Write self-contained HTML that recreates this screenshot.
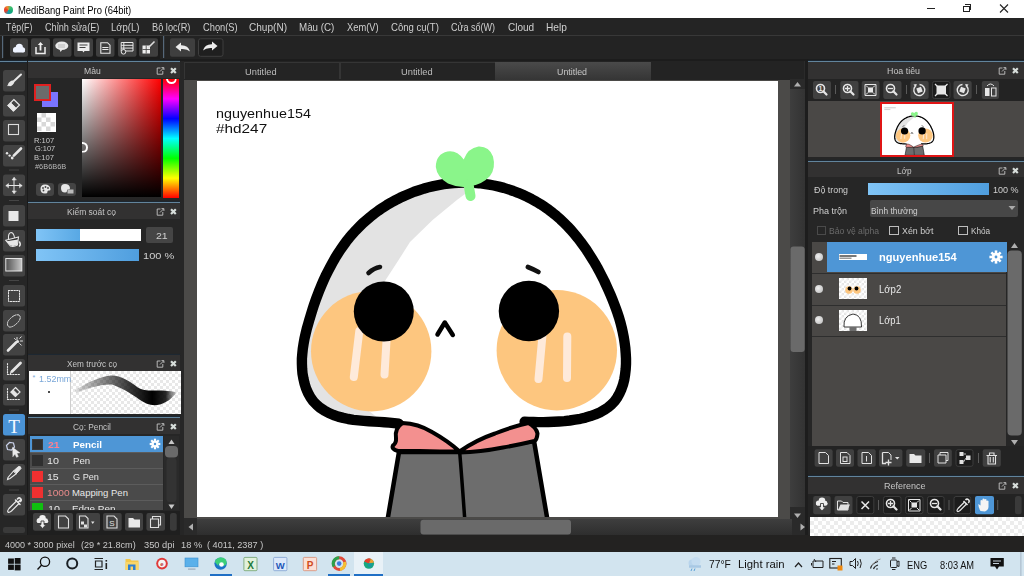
<!DOCTYPE html>
<html><head><meta charset="utf-8">
<style>
*{box-sizing:border-box}
html,body{margin:0;padding:0}
body{width:1024px;height:576px;overflow:hidden;position:relative;background:#262626;font-family:"Liberation Sans",sans-serif;color:#d8d8d8}
.a{position:absolute}
.t{position:absolute;white-space:nowrap;line-height:1}
.btn{position:absolute;background:#474747;border-radius:3px}
.bl{position:absolute;height:1.2px;background:#62849c;box-shadow:0 -1px 1px #1c2935,0 1px 1px #1c2935}
.hdr{position:absolute;background:#323131;height:16px}
</style></head><body>
<!-- title bar -->
<div class="a" style="left:0;top:0;width:1024px;height:18px;background:#fff"></div>
<!-- menubar -->
<div class="a" style="left:0;top:18px;width:1024px;height:17px;background:#242424"></div>
<div class="a" style="left:0;top:35px;width:1024px;height:1px;background:#383838"></div>
<!-- toolbar -->
<div class="a" style="left:0;top:36px;width:1024px;height:25px;background:#232323"></div><div class="a" style="left:0;top:59px;width:1024px;height:2px;background:#1c1c1c"></div><div class="a" style="left:3px;top:36px;width:157px;height:23px;background:#1b1b1b"></div>
<!-- left tool column -->
<div class="a" style="left:0;top:61px;width:28px;height:474px;background:#262626"></div>
<!-- left panel -->
<div class="a" style="left:28px;top:61px;width:152px;height:474px;background:#262626"></div>

<!-- canvas area -->
<div class="a" style="left:184px;top:61px;width:624px;height:474px;background:#4b4a48"></div>
<div class="a" style="left:184px;top:61px;width:624px;height:19px;background:#232323"></div>
<div class="a" style="left:197px;top:81px;width:581px;height:436px;background:#fff"></div>
<!-- right panel -->
<div class="a" style="left:804px;top:61px;width:4px;height:474px;background:#2a2a2a"></div>
<div class="a" style="left:808px;top:61px;width:216px;height:474px;background:#262626"></div>
<!-- status bar -->
<div class="a" style="left:0;top:535px;width:1024px;height:17px;background:#232221"></div>
<!-- taskbar -->
<div class="a" style="left:0;top:552px;width:1024px;height:24px;background:#d2e4ef"></div>
<!-- title content -->
<div class="a" style="left:4px;top:5.5px;width:8.5px;height:8.5px;border-radius:50%;background:conic-gradient(from -80deg,#e8402a 0deg,#f08a30 60deg,#3cc070 120deg,#14a878 200deg,#1a98b0 270deg,#e8402a 330deg)"></div>
<div class="t" id="ttl" style="left:18.20px;top:5.5px;font-size:10.2px;color:#000;transform:scaleX(0.926);transform-origin:0 0">MediBang Paint Pro (64bit)</div>
<div class="a" style="left:927px;top:8px;width:8px;height:1px;background:#222"></div>
<div class="a" style="left:963px;top:5.5px;width:6.5px;height:6.5px;border:1px solid #222"></div>
<div class="a" style="left:965px;top:4px;width:6px;height:6px;border-top:1px solid #222;border-right:1px solid #222"></div>
<svg class="a" style="left:999px;top:4px" width="10" height="9" viewBox="0 0 10 9"><path d="M1 0.5L9 8.5M9 0.5L1 8.5" stroke="#222" stroke-width="1.1"/></svg>
<!-- menu -->
<div class="t" id="m1" style="left:6.14px;top:21.7px;font-size:11px;color:#cfcfcf;transform:scaleX(0.800);transform-origin:0 0">Tệp(F)</div>
<div class="t" id="m2" style="left:45.10px;top:21.7px;font-size:11px;color:#cfcfcf;transform:scaleX(0.830);transform-origin:0 0">Chỉnh sửa(E)</div>
<div class="t" id="m3" style="left:110.85px;top:21.7px;font-size:11px;color:#cfcfcf;transform:scaleX(0.865);transform-origin:0 0">Lớp(L)</div>
<div class="t" id="m4" style="left:152.16px;top:21.7px;font-size:11px;color:#cfcfcf;transform:scaleX(0.838);transform-origin:0 0">Bộ lọc(R)</div>
<div class="t" id="m5" style="left:203.25px;top:21.7px;font-size:11px;color:#cfcfcf;transform:scaleX(0.845);transform-origin:0 0">Chọn(S)</div>
<div class="t" id="m6" style="left:249.38px;top:21.7px;font-size:11px;color:#cfcfcf;transform:scaleX(0.915);transform-origin:0 0">Chụp(N)</div>
<div class="t" id="m7" style="left:299.30px;top:21.7px;font-size:11px;color:#cfcfcf;transform:scaleX(0.889);transform-origin:0 0">Màu (C)</div>
<div class="t" id="m8" style="left:347.26px;top:21.7px;font-size:11px;color:#cfcfcf;transform:scaleX(0.847);transform-origin:0 0">Xem(V)</div>
<div class="t" id="m9" style="left:391.22px;top:21.7px;font-size:11px;color:#cfcfcf;transform:scaleX(0.869);transform-origin:0 0">Công cụ(T)</div>
<div class="t" id="mA" style="left:451.04px;top:21.7px;font-size:11px;color:#cfcfcf;transform:scaleX(0.819);transform-origin:0 0">Cửa sổ(W)</div>
<div class="t" id="mB" style="left:507.60px;top:21.7px;font-size:11px;color:#cfcfcf;transform:scaleX(0.911);transform-origin:0 0">Cloud</div>
<div class="t" id="mC" style="left:545.58px;top:21.7px;font-size:11px;color:#cfcfcf;transform:scaleX(0.924);transform-origin:0 0">Help</div>
<!-- toolbar content -->
<svg class="a" style="left:0;top:36px" width="240" height="25" viewBox="0 36 240 25">
<rect x="2" y="36" width="1.2" height="22" fill="#56687a"/>
<g fill="#3f3f3f">
<rect x="10" y="38.3" width="18" height="18.5" rx="2"/>
<rect x="31" y="38.3" width="19" height="18.5" rx="2"/>
<rect x="53" y="38.3" width="18.5" height="18.5" rx="2"/>
<rect x="74" y="38.3" width="19" height="18.5" rx="2"/>
<rect x="96" y="38.3" width="18.5" height="18.5" rx="2"/>
<rect x="118" y="38.3" width="18.5" height="18.5" rx="2"/>
<rect x="139" y="38.3" width="19" height="18.5" rx="2"/>
<rect x="170" y="38.3" width="25" height="18.5" rx="2"/>
</g>
<rect x="198.5" y="38.8" width="24.5" height="17.5" rx="2" fill="#1f1f1f" stroke="#3f3f3f" stroke-width="1"/>
<rect x="163" y="36" width="1.2" height="22" fill="#56687a"/>
<!-- cloud -->
<g fill="#eef3ff"><circle cx="15.6" cy="49.6" r="2.6"/><circle cx="19.3" cy="47.3" r="3.6"/><circle cx="22.6" cy="49.8" r="2.5"/><rect x="13" y="49.5" width="12" height="3" rx="1.4"/></g>
<!-- share -->
<path d="M36 47 V53.5 H45 V47" fill="none" stroke="#eee" stroke-width="1.5"/>
<path d="M40.5 42 L37.8 45 H39.6 V50.5 H41.4 V45 H43.2 Z" fill="#eee"/>
<!-- bubble -->
<ellipse cx="61.8" cy="45.8" rx="6.5" ry="4.3" fill="#e8e8e8"/>
<path d="M59.5 49 L60.5 52 L62.5 49.5Z" fill="#e8e8e8"/>
<path d="M58 45 H65 M58 47 H65" stroke="#999" stroke-width="0.6"/>
<!-- comment -->
<path d="M77.5 42.5 H89.5 V51 H84.5 L83.5 52.5 L82.5 51 H77.5 Z" fill="#ececec"/>
<path d="M79.5 45 H87.5 M79.5 47.5 H85.5" stroke="#3f3f3f" stroke-width="1.1"/>
<!-- doc -->
<path d="M100.8 42.7 H107.5 L110 45.2 V53.2 H100.8 Z" fill="none" stroke="#e8e8e8" stroke-width="1.1"/>
<path d="M102.3 47.5 H108.5 M102.3 49.5 H108.5" stroke="#e8e8e8" stroke-width="1"/>
<!-- list -->
<path d="M121.2 42.5 H133 V51 H121.2 Z M121.2 45.3 H133 M121.2 48.1 H133 M123.8 42.5 V51" fill="none" stroke="#e8e8e8" stroke-width="1"/>
<circle cx="123.5" cy="51.8" r="2.3" fill="#3f3f3f" stroke="#e8e8e8" stroke-width="1"/>
<!-- grid pencil -->
<path d="M142.5 45.5 H150 V53.5 H142.5 Z" fill="#eee"/>
<path d="M146.2 45.5 V53.5 M142.5 49.5 H150" stroke="#3f3f3f" stroke-width="0.8"/>
<path d="M148 48 L154.5 41.5" stroke="#ddd" stroke-width="1.6"/>
<!-- undo -->
<path d="M175.5 47 L181 42.5 V45.3 Q188 45 190 51.5 Q187 48.5 181 49 V51.5 Z" fill="#ececec"/>
<!-- redo -->
<path d="M217.5 46 L212 41.5 V44.3 Q205 44 203 50.5 Q206 47.5 212 48 V50.5 Z" fill="#ececec"/>
</svg>
<div class="bl" style="left:0;top:61px;width:27px"></div>
<div class="bl" style="left:28px;top:61px;width:152px"></div>
<div class="bl" style="left:808px;top:61px;width:216px"></div>
<!-- tool column -->
<div class="a" style="left:27px;top:61px;width:1px;height:474px;background:#1b1b1b"></div>
<svg class="a" style="left:0;top:61px" width="28" height="474" viewBox="0 61 28 474">
<rect x="3" y="70" width="22" height="21.5" rx="2.5" fill="#434343"/><rect x="3" y="95" width="22" height="21.5" rx="2.5" fill="#434343"/><rect x="3" y="120" width="22" height="21.5" rx="2.5" fill="#434343"/><rect x="3" y="145" width="22" height="21.5" rx="2.5" fill="#434343"/><rect x="3" y="174.5" width="22" height="21.5" rx="2.5" fill="#434343"/><rect x="3" y="205" width="22" height="21.5" rx="2.5" fill="#434343"/><rect x="3" y="230" width="22" height="21.5" rx="2.5" fill="#434343"/><rect x="3" y="255" width="22" height="21.5" rx="2.5" fill="#434343"/><rect x="3" y="285" width="22" height="21.5" rx="2.5" fill="#434343"/><rect x="3" y="310" width="22" height="21.5" rx="2.5" fill="#434343"/><rect x="3" y="334" width="22" height="21.5" rx="2.5" fill="#434343"/><rect x="3" y="359" width="22" height="21.5" rx="2.5" fill="#434343"/><rect x="3" y="384" width="22" height="21.5" rx="2.5" fill="#434343"/><rect x="3" y="414" width="22" height="21.5" rx="2.5" fill="#4a93d6"/><rect x="3" y="439" width="22" height="21.5" rx="2.5" fill="#434343"/><rect x="3" y="464" width="22" height="21.5" rx="2.5" fill="#434343"/><rect x="3" y="494" width="22" height="21.5" rx="2.5" fill="#434343"/><rect x="9" y="169.5" width="10" height="1" fill="#454545"/><rect x="9" y="200" width="10" height="1" fill="#454545"/><rect x="9" y="280" width="10" height="1" fill="#454545"/><rect x="9" y="409.5" width="10" height="1" fill="#454545"/><rect x="9" y="489.5" width="10" height="1" fill="#454545"/>
<rect x="3" y="527" width="22" height="6" rx="2" fill="#3a3a3a"/>
<g fill="none" stroke="#e6e6e6" stroke-linecap="round">
<!-- brush -->
<path d="M21 74.5 L13.5 81.5" stroke-width="2"/>
<ellipse cx="11.2" cy="83.3" rx="3.4" ry="2.1" transform="rotate(-40 11.2 83.3)" fill="#e6e6e6" stroke="none"/><path d="M8 85.5 L9.5 84" stroke-width="1.2"/>
<!-- eraser -->
<path d="M13.8 99.5 L19.5 105 L13.5 111 L8 105.5 Z" stroke-width="1.2"/>
<path d="M8 105.5 L10.7 102.8 L16.3 108.2 L13.5 111 Z" fill="#e6e6e6" stroke-width="0.8"/>
<!-- rect -->
<rect x="8.5" y="124.5" width="10" height="10" stroke-width="1.1" stroke="#dcdcdc"/>
<!-- line pen -->
<path d="M21 148.5 L13.8 155.7" stroke-width="2.6"/>
<circle cx="7" cy="153.2" r="1.2" fill="#e6e6e6" stroke="none"/><circle cx="9.6" cy="155.6" r="1.2" fill="#e6e6e6" stroke="none"/><circle cx="12.2" cy="158" r="1.4" fill="#e6e6e6" stroke="none"/>
<!-- move -->
<path d="M14 178 V193 M6.5 185.5 H21.5" stroke-width="1"/>
<path d="M14 177.5 L12 180 H16Z M14 193.5 L12 191 H16Z M6 185.5 L8.5 183.5 V187.5Z M22 185.5 L19.5 183.5 V187.5Z" fill="#e6e6e6" stroke-width="0.5"/>
<!-- fill rect -->
<rect x="8.5" y="211" width="10" height="10" fill="#e8e8e8" stroke="none"/>
<!-- bucket -->
<path d="M5.8 240.3 L18.5 237 L17.4 245 Q14 247 10.4 246 Z" fill="#2e2e2e" stroke="#e6e6e6" stroke-width="1.1"/>
<path d="M6.3 241.2 L18 239.5 L17.2 244.8 Q14 246.6 10.6 245.6 Z" fill="#e6e6e6" stroke="none"/>
<path d="M8.5 239 Q8 233 11 232.5 Q13.5 232.5 14.5 237.5" stroke-width="1.1"/>
<path d="M19.5 242 Q21 244.5 19.5 246" stroke-width="1.5"/>
<!-- gradient -->
<defs><linearGradient id="gr1" x1="0" y1="0" x2="1" y2="0"><stop offset="0" stop-color="#505050"/><stop offset="1" stop-color="#c8c8c8"/></linearGradient></defs>
<rect x="5.8" y="258.5" width="16" height="12.5" fill="url(#gr1)" stroke="#e6e6e6" stroke-width="1"/>
<!-- select rect -->
<rect x="8.5" y="290.5" width="11" height="11" stroke-width="1" stroke-dasharray="1.5 1.2"/>
<!-- lasso -->
<path d="M8 326 Q6 322 11 318 Q15 314 19 315 Q21.5 317 19 321 Q15 326 11 327 Q9 327.5 8 326Z" stroke-width="1" stroke-dasharray="1.5 1.2"/>
<!-- magic wand -->
<path d="M8 350.5 L16 342.5" stroke-width="2.6"/>
<path d="M17 337.5 V339.5 M20.5 341 H22.5 M19.8 338.3 L21.3 336.8 M19.8 343.7 L21.3 345.2 M14.5 338.5 L15.5 339.5" stroke-width="1"/>
<circle cx="17.5" cy="341.5" r="1.6" fill="#e6e6e6" stroke="none"/>
<!-- select pen -->
<path d="M7.5 363.5 V374.5 H20" stroke-width="1.1" stroke-dasharray="1.3 1.4"/>
<path d="M12 371.5 L20.5 363" stroke-width="2.8"/>
<path d="M10.5 373.5 L11.5 371" stroke-width="1.2"/>
<!-- select eraser -->
<path d="M7.5 388.5 V399.5 H20" stroke-width="1.1" stroke-dasharray="1.3 1.4"/>
<path d="M15.5 387.5 L20 392 L15.5 396.5 L11 392 Z" stroke-width="1.2"/>
<path d="M11 392 L13.2 389.8 L17.7 394.3 L15.5 396.5 Z" fill="#e6e6e6" stroke-width="0.6"/>
<!-- shape select -->
<path d="M6.5 445.5 L9.5 442.5 L13.5 443 L14.5 447 L11.5 450 L7.5 449.5 Z" stroke="#c8d0e8" stroke-width="1.2"/>
<path d="M12.8 447.5 L19.8 452.8 L16.8 453.2 L18.3 456.5 L16.5 457.3 L15 454 L13 456.5 Z" fill="#eaeaea" stroke-width="0.5"/>
<!-- knife pen -->
<path d="M13.5 471 L18.5 466.5 Q21 466 21 468.5 L16.5 473.5 Z" fill="#e6e6e6" stroke-width="1"/>
<path d="M13.5 471 L8 477.5 L7.5 479.5 L10 478.5 L16.5 473.5" stroke-width="1.1"/>
<!-- eyedropper -->
<path d="M16.5 501 L9 508.5 Q7 511 8 512 Q9 513 11.5 511 L19 503.5" stroke-width="1.2"/>
<path d="M15.5 500 L20 504.5 M17.5 499 Q19 497 20.5 498.5 Q22 500 20.5 501.5 M18.2 502.3 L20.7 499.8" stroke-width="1.6"/>
</g>
<!-- text T -->
<text x="14" y="433" text-anchor="middle" font-family="Liberation Serif" font-size="19" fill="#f4f8ff">T</text>
</svg>
<!-- left panel: color -->
<div class="hdr" style="left:28px;top:62px;width:152px"></div>
<div class="t" id="h1" style="left:84.06px;top:65.6px;font-size:9.7px;color:#c6c6c6;transform:scaleX(0.889);transform-origin:0 0">Màu</div>
<svg class="a" style="left:156px;top:65px" width="22" height="11" viewBox="0 0 22 11"><path d="M4.5 3 H1.2 V9.2 H6.8 V6" fill="none" stroke="#c4c4c4" stroke-width="0.9"/><path d="M4 6.5 L7.5 3 M5.5 2.6 H7.9 V5" fill="none" stroke="#c4c4c4" stroke-width="0.9"/><path d="M15 3.2 L19.8 8 M19.8 3.2 L15 8" stroke="#d8dedb" stroke-width="2.2"/></svg>

<div class="a" style="left:82px;top:79px;width:78.5px;height:118px;background:linear-gradient(to bottom,rgba(0,0,0,0),#000),linear-gradient(to right,#fff,#f00)"></div>
<div class="a" style="left:163px;top:79px;width:16px;height:118.5px;background:linear-gradient(to bottom,#f00 0%,#f0f 16.67%,#00f 33.33%,#0ff 50%,#0f0 66.67%,#ff0 83.33%,#f00 100%)"></div>
<div class="a" style="left:165.5px;top:73px;width:11px;height:11px;border-radius:50%;border:2px solid #fff;clip-path:inset(6px 0 0 0)"></div>
<div class="a" style="left:77px;top:141.5px;width:11px;height:11px;border-radius:50%;border:2px solid #fff;clip-path:inset(0 0 0 5px)"></div>
<div class="a" style="left:42px;top:91.8px;width:16px;height:15.2px;background:#7a74ff"></div>
<div class="a" style="left:33.7px;top:83.8px;width:17.7px;height:17.2px;background:#6b6b6b;border:2px solid #e02020"></div>
<div class="a" style="left:37px;top:113px;width:19px;height:18.7px;background:#fff"></div>
<svg class="a" style="left:37px;top:113px" width="19" height="19"><g fill="#d8d8d8"><rect x="4.5" y="0" width="4.5" height="4.5"/><rect x="0" y="4.5" width="4.5" height="4.5"/><rect x="9" y="4.5" width="4.5" height="4.5"/><rect x="4.5" y="9" width="4.5" height="4.5"/><rect x="13.5" y="9" width="4.5" height="4.5"/><rect x="0" y="13.5" width="4.5" height="4.5"/><rect x="9" y="13.5" width="4.5" height="4.5"/></g></svg>
<div class="t" id="rgb1" style="left:33.71px;top:136.7px;font-size:8px;color:#c8c8c8;transform:scaleX(0.950);transform-origin:0 0">R:107</div>
<div class="t" id="rgb2" style="left:34.65px;top:145.4px;font-size:8px;color:#c8c8c8;transform:scaleX(0.929);transform-origin:0 0">G:107</div>
<div class="t" id="rgb3" style="left:33.71px;top:154.1px;font-size:8px;color:#c8c8c8;transform:scaleX(0.950);transform-origin:0 0">B:107</div>
<div class="t" id="rgb4" style="left:34.65px;top:162.8px;font-size:8px;color:#b8b8b8;transform:scaleX(0.926);transform-origin:0 0">#6B6B6B</div>
<div class="btn" style="left:36.3px;top:182.5px;width:18px;height:13px;background:#444"></div>
<div class="btn" style="left:58px;top:182.5px;width:18px;height:13px;background:#444"></div>
<svg class="a" style="left:36px;top:182px" width="42" height="14" viewBox="36 182 42 14"><path d="M45 184.5 Q50 184.5 50.5 189 Q50.5 191 48.5 190.5 Q47 190.5 47.5 192 Q47.5 193.5 45 193.5 Q40.5 193.5 40.5 189 Q40.5 184.5 45 184.5Z" fill="#e6e6e6"/><circle cx="43" cy="188" r="0.9" fill="#444"/><circle cx="45.5" cy="187" r="0.9" fill="#444"/><circle cx="48" cy="188" r="0.9" fill="#444"/><circle cx="43.5" cy="190.5" r="0.9" fill="#444"/>
<path d="M65 184 Q69.5 184 70 188 Q70 190 68 189.5 Q66.5 189.5 67 191 Q67 192.5 65 192.5 Q61 192.5 61 188 Q61 184 65 184Z" fill="#e6e6e6"/><rect x="67.5" y="189.5" width="6" height="4" fill="#bbb"/></svg>
<div class="bl" style="left:28px;top:202px;width:152px"></div>
<!-- brush control -->
<div class="hdr" style="left:28px;top:203px;width:152px"></div>
<div class="t" id="h2" style="left:67.32px;top:206.6px;font-size:9.7px;color:#c6c6c6;transform:scaleX(0.873);transform-origin:0 0">Kiểm soát cọ</div>
<svg class="a" style="left:156px;top:206px" width="22" height="11" viewBox="0 0 22 11"><path d="M4.5 3 H1.2 V9.2 H6.8 V6" fill="none" stroke="#c4c4c4" stroke-width="0.9"/><path d="M4 6.5 L7.5 3 M5.5 2.6 H7.9 V5" fill="none" stroke="#c4c4c4" stroke-width="0.9"/><path d="M15 3.2 L19.8 8 M19.8 3.2 L15 8" stroke="#d8dedb" stroke-width="2.2"/></svg>

<div class="a" style="left:35.5px;top:229px;width:105px;height:12px;background:#fff"></div>
<div class="a" style="left:35.5px;top:229px;width:44.5px;height:12px;background:linear-gradient(to right,#80c4f6,#58a8e4)"></div>
<div class="a" style="left:146px;top:227px;width:27px;height:16px;background:#454545;border-radius:2px"></div>
<div class="t" id="sz21" style="left:155.95px;top:231px;font-size:9.5px;color:#d0d0d0;transform:scaleX(1.111);transform-origin:0 0">21</div>
<div class="a" style="left:35.5px;top:249px;width:103.5px;height:12px;background:linear-gradient(to right,#80c4f6,#4f9ede)"></div>
<div class="t" id="op100" style="left:143.06px;top:251px;font-size:9.5px;color:#d0d0d0;transform:scaleX(1.160);transform-origin:0 0">100 %</div>
<!-- brush preview -->
<div class="bl" style="left:28px;top:354.5px;width:152px"></div>
<div class="hdr" style="left:28px;top:355px;width:152px"></div>
<div class="t" id="h3" style="left:66.55px;top:358.6px;font-size:9.7px;color:#c6c6c6;transform:scaleX(0.847);transform-origin:0 0">Xem trước cọ</div>
<svg class="a" style="left:156px;top:358px" width="22" height="11" viewBox="0 0 22 11"><path d="M4.5 3 H1.2 V9.2 H6.8 V6" fill="none" stroke="#c4c4c4" stroke-width="0.9"/><path d="M4 6.5 L7.5 3 M5.5 2.6 H7.9 V5" fill="none" stroke="#c4c4c4" stroke-width="0.9"/><path d="M15 3.2 L19.8 8 M19.8 3.2 L15 8" stroke="#d8dedb" stroke-width="2.2"/></svg>

<div class="a" style="left:29px;top:371px;width:41px;height:42.5px;background:#fff"></div>
<div class="a" style="left:70px;top:371px;width:111px;height:42.5px;background-color:#fff;background-image:linear-gradient(45deg,#e8e8e8 25%,transparent 25%,transparent 75%,#e8e8e8 75%),linear-gradient(45deg,#e8e8e8 25%,transparent 25%,transparent 75%,#e8e8e8 75%);background-size:6px 6px;background-position:0 0,3px 3px"></div>
<div class="a" style="left:70px;top:371px;width:1px;height:42.5px;background:#cfcfcf"></div>
<div class="t" id="mm" style="left:39.01px;top:374.3px;font-size:9.8px;color:#7aa7d8;transform:scaleX(0.912);transform-origin:0 0">1.52mm</div>
<div class="t" style="left:32.5px;top:374px;font-size:7px;color:#7aa7d8">*</div>
<div class="a" style="left:47.8px;top:390.8px;width:2.5px;height:2.5px;border-radius:50%;background:#111"></div>
<svg class="a" style="left:70px;top:371px" width="111" height="43" viewBox="70 371 111 43">
<defs><linearGradient id="stk" x1="75" y1="0" x2="178" y2="0" gradientUnits="userSpaceOnUse"><stop offset="0" stop-color="#000" stop-opacity="0.12"/><stop offset="0.3" stop-color="#000" stop-opacity="0.5"/><stop offset="0.55" stop-color="#000" stop-opacity="0.8"/><stop offset="0.75" stop-color="#000" stop-opacity="1"/><stop offset="0.88" stop-color="#000" stop-opacity="0.85"/><stop offset="1" stop-color="#000" stop-opacity="0.05"/></linearGradient></defs>
<filter id="bl1"><feGaussianBlur stdDeviation="0.7"/></filter><path filter="url(#bl1)" d="M74.9 390.3 C85 384 98 377 110.8 375.5 C120 375 130 381 137.4 387.2 C143 391 150 390.5 155 390.5 C165 390.5 172 391 177 392.5 C172 398 168 402 160 404.5 C152 406.5 146 404 140 400 C132 394 124 389 112 384.5 C100 384 86 389 76.4 392.7 Z" fill="url(#stk)"/>
</svg>
<!-- brush list -->
<div class="bl" style="left:28px;top:417px;width:152px"></div>
<div class="hdr" style="left:28px;top:418px;width:152px"></div>
<div class="t" id="h4" style="left:73.00px;top:421.6px;font-size:9.7px;color:#c6c6c6;transform:scaleX(0.859);transform-origin:0 0">Cọ: Pencil</div>
<svg class="a" style="left:156px;top:421px" width="22" height="11" viewBox="0 0 22 11"><path d="M4.5 3 H1.2 V9.2 H6.8 V6" fill="none" stroke="#c4c4c4" stroke-width="0.9"/><path d="M4 6.5 L7.5 3 M5.5 2.6 H7.9 V5" fill="none" stroke="#c4c4c4" stroke-width="0.9"/><path d="M15 3.2 L19.8 8 M19.8 3.2 L15 8" stroke="#d8dedb" stroke-width="2.2"/></svg>

<div class="a" style="left:30px;top:436px;width:133px;height:74px;background:#4a4a4a;overflow:hidden">
 <div class="a" style="left:0;top:0;width:133px;height:16.3px;background:#4e96d6"></div>
 <div class="a" style="left:0;top:16.3px;width:133px;height:1px;background:#5c5c5c"></div>
 <div class="a" style="left:0;top:32px;width:133px;height:1px;background:#5c5c5c"></div>
 <div class="a" style="left:0;top:48px;width:133px;height:1px;background:#5c5c5c"></div>
 <div class="a" style="left:0;top:64px;width:133px;height:1px;background:#5c5c5c"></div>
 <div class="a" style="left:2px;top:2.5px;width:11px;height:11.5px;background:#2f2f2f;border:1px solid #3a3a3a"></div>
 <div class="a" style="left:2px;top:18.5px;width:11px;height:11.5px;background:#2f2f2f"></div>
 <div class="a" style="left:2px;top:34.5px;width:11px;height:11.5px;background:#f03030"></div>
 <div class="a" style="left:2px;top:50.5px;width:11px;height:11.5px;background:#f03030"></div>
 <div class="a" style="left:2px;top:66.5px;width:11px;height:11.5px;background:#10c010"></div>
</div>
<div class="t" id="bn1" style="left:48.05px;top:439.5px;font-size:9.5px;color:#ff7f90;font-weight:bold;transform:scaleX(1.100);transform-origin:0 0">21</div>
<div class="t" id="bt1" style="left:72.81px;top:439.5px;font-size:9.5px;color:#fff;font-weight:bold;transform:scaleX(1.037);transform-origin:0 0">Pencil</div>
<div class="t" id="bn2" style="left:46.93px;top:455.5px;font-size:9.5px;color:#e8e8e8;transform:scaleX(1.133);transform-origin:0 0">10</div>
<div class="t" id="bt2" style="left:72.82px;top:455.5px;font-size:9.5px;color:#e8e8e8;transform:scaleX(1.012);transform-origin:0 0">Pen</div>
<div class="t" id="bn3" style="left:46.99px;top:471.5px;font-size:9.5px;color:#e8e8e8;transform:scaleX(1.111);transform-origin:0 0">15</div>
<div class="t" id="bt3" style="left:73.00px;top:471.5px;font-size:9.5px;color:#e8e8e8;transform:scaleX(0.963);transform-origin:0 0">G Pen</div>
<div class="t" id="bn4" style="left:47.39px;top:487.5px;font-size:9.5px;color:#e88a8a;transform:scaleX(1.070);transform-origin:0 0">1000</div>
<div class="t" id="bt4" style="left:71.95px;top:487.5px;font-size:9.5px;color:#e8e8e8;transform:scaleX(1.000);transform-origin:0 0">Mapping Pen</div>
<div style="position:absolute;left:30px;top:500px;width:133px;height:10px;overflow:hidden">
<div class="t" id="bn5x" style="left:17.5px;top:3.5px;font-size:9.5px;color:#e8e8e8;transform:scaleX(1.133);transform-origin:0 0">10</div>
<div class="t" id="bt5x" style="left:42px;top:3.5px;font-size:9.5px;color:#e8e8e8;transform:scaleX(1.042);transform-origin:0 0">Edge Pen</div>
</div>
<svg class="a" style="left:149px;top:438px" width="12" height="12" viewBox="-6 -6 12 12"><g fill="#fff"><circle r="3.6"/><g id="gt"><rect x="-1.1" y="-5.3" width="2.2" height="10.6"/><rect x="-1.1" y="-5.3" width="2.2" height="10.6" transform="rotate(45)"/><rect x="-1.1" y="-5.3" width="2.2" height="10.6" transform="rotate(90)"/><rect x="-1.1" y="-5.3" width="2.2" height="10.6" transform="rotate(135)"/></g></g><circle r="1.2" fill="#4e96d6"/></svg>
<div class="a" style="left:164px;top:436px;width:15px;height:74px;background:#2a2a2a"></div>
<svg class="a" style="left:164px;top:436px" width="15" height="74" viewBox="0 0 15 74"><path d="M7.5 3.5 L10.5 8 H4.5Z" fill="#c8c8c8"/><rect x="1" y="10" width="13" height="11.5" rx="4" fill="#6a6a6a"/><rect x="2.5" y="22" width="10" height="44" rx="3" fill="#333"/><path d="M7.5 73 L10.5 68.5 H4.5Z" fill="#c8c8c8"/></svg>
<!-- brush list bottom toolbar -->
<div class="a" style="left:28px;top:511px;width:152px;height:24px;background:#1f1f1f"></div>
<svg class="a" style="left:28px;top:511px" width="152" height="24" viewBox="28 511 152 24">
<g fill="#414141"><rect x="33" y="513" width="18" height="17.7" rx="2"/><rect x="54" y="513" width="19" height="17.7" rx="2"/><rect x="76" y="513" width="24" height="17.7" rx="2"/><rect x="103" y="513" width="18.7" height="17.7" rx="2"/><rect x="125" y="513" width="18" height="17.7" rx="2"/><rect x="146.4" y="513" width="18.6" height="17.7" rx="2"/><rect x="170" y="513" width="6.75" height="17.7" rx="2.5" fill="#3a3a3a"/></g>
<g fill="#eee"><circle cx="39.3" cy="520.5" r="2.6"/><circle cx="42.5" cy="518.3" r="3.3"/><circle cx="45.6" cy="520.7" r="2.4"/><rect x="36.8" y="520" width="11.5" height="3" rx="1.4"/></g><path d="M41 521 H44 V524.5 H46 L42.5 528.5 L39 524.5 H41Z" fill="#eee" stroke="#414141" stroke-width="0.9"/>
<path d="M58.5 516 H65.5 L68.5 519 V528 H58.5 Z" fill="none" stroke="#e0e0e0" stroke-width="1.1"/>
<path d="M79.5 516 H85.5 L88 518.5 V528 H79.5 Z" fill="none" stroke="#e0e0e0" stroke-width="1.1"/><rect x="81" y="521.5" width="3" height="3" fill="#e0e0e0"/><rect x="84" y="524.5" width="3" height="3" fill="#e0e0e0"/><path d="M91 521.5 L94.5 521.5 L92.75 524Z" fill="#e0e0e0"/>
<path d="M107 516 H114 L117 519 V528 H107 Z" fill="none" stroke="#e0e0e0" stroke-width="1.1"/><text x="112" y="526" font-size="8" text-anchor="middle" fill="#e0e0e0" font-family="Liberation Sans">S</text>
<path d="M128.5 518 H133 L134.5 519.5 H140 V527.5 H128.5Z" fill="#e8e8e8"/>
<path d="M150.5 519 H158.5 V527.5 H150.5Z M152.5 519 V516.5 H160.5 V525 H158.5" fill="none" stroke="#e0e0e0" stroke-width="1.1"/>
</svg>
<!-- canvas tabs -->
<div class="a" style="left:184px;top:62px;width:156px;height:17px;background:#242424;border:1px solid #353535;border-bottom:none"></div>
<div class="a" style="left:339.5px;top:62px;width:156px;height:17px;background:#242424;border:1px solid #353535;border-bottom:none"></div>
<div class="a" style="left:495.4px;top:61.5px;width:155.3px;height:18px;background:linear-gradient(to bottom,#4a4a4a,#353535)"></div>
<div class="t" id="tb1" style="left:245.02px;top:66.5px;font-size:9.4px;color:#bdbdbd;transform:scaleX(0.993);transform-origin:0 0">Untitled</div>
<div class="t" id="tb2" style="left:401.02px;top:66.5px;font-size:9.4px;color:#bdbdbd;transform:scaleX(0.993);transform-origin:0 0">Untitled</div>
<div class="t" id="tb3" style="left:557.07px;top:66.5px;font-size:9.4px;color:#c8c8c8;transform:scaleX(0.945);transform-origin:0 0">Untitled</div>
<!-- vertical scrollbar -->
<div class="a" style="left:790px;top:79px;width:15px;height:440px;background:linear-gradient(to right,#3e3e3e,#333)"></div>
<div class="a" style="left:805px;top:61px;width:3px;height:474px;background:#1d1d1d"></div>
<svg class="a" style="left:790px;top:79px" width="15" height="440" viewBox="0 0 15 440"><rect x="0" y="0" width="15" height="10" fill="#2a2a2a"/><path d="M7.5 3 L11 7.5 H4Z" fill="#b0b0b0"/><rect x="0.5" y="167.4" width="14.2" height="105.6" rx="3" fill="#6a6a6a"/><rect x="0" y="428" width="15" height="12" fill="#2a2a2a"/><path d="M7.5 439 L11 434.5 H4Z" fill="#b0b0b0"/></svg>
<!-- horizontal scrollbar -->
<div class="a" style="left:184px;top:518.5px;width:621px;height:16px;background:linear-gradient(to bottom,#3e3e3e,#2e2e2e)"></div>
<svg class="a" style="left:184px;top:518px" width="621" height="17" viewBox="0 0 621 17"><rect x="0" y="0" width="13" height="17" fill="#2a2a2a"/><path d="M4.5 9 L9 5.5 V12.5Z" fill="#b0b0b0"/><rect x="236.5" y="1.8" width="150.5" height="14.6" rx="3" fill="#6a6a6a"/><rect x="608" y="0" width="13" height="17" fill="#2a2a2a"/><path d="M621 9 L616.5 5.5 V12.5Z" fill="#b0b0b0"/></svg>
<!-- CANVAS -->
<svg class="a" id="cv" style="left:197px;top:81px" width="581" height="436" viewBox="197 81 581 436">
<g id="char"><path d="M524.6 421.8 L528.9 421.9 L533.5 422.0 L538.2 422.1 L543.2 422.1 L548.4 422.0 L553.7 421.8 L559.0 421.5 L564.4 421.1 L569.8 420.5 L575.1 419.7 L580.4 418.8 L585.5 417.6 L590.5 416.1 L595.3 414.4 L599.8 412.5 L604.0 410.1 L607.9 407.5 L611.5 404.5 L614.6 401.2 L617.3 397.4 L619.6 393.3 L621.5 388.9 L623.1 384.3 L624.3 379.4 L625.1 374.4 L625.7 369.2 L626.0 363.9 L626.0 358.6 L625.7 353.2 L625.3 347.9 L624.6 342.6 L623.8 337.5 L622.8 332.4 L621.7 327.5 L620.5 322.7 L619.1 317.9 L617.6 313.3 L615.9 308.6 L614.2 304.0 L612.4 299.4 L610.5 294.8 L608.5 290.2 L606.4 285.6 L604.3 281.0 L602.0 276.5 L599.7 272.0 L597.3 267.5 L594.8 263.1 L592.1 258.7 L589.4 254.4 L586.6 250.1 L583.7 246.0 L580.7 241.9 L577.6 237.9 L574.4 234.0 L571.1 230.1 L567.6 226.4 L564.1 222.9 L560.5 219.4 L556.7 216.1 L552.8 212.9 L548.8 209.8 L544.7 206.9 L540.5 204.2 L536.2 201.6 L531.8 199.2 L527.3 196.9 L522.8 194.8 L518.1 192.8 L513.4 191.0 L508.6 189.4 L503.8 187.9 L498.9 186.6 L493.9 185.5 L489.0 184.6 L484.0 183.8 L479.0 183.2 L473.9 182.8 L468.8 182.6 L463.8 182.5 L458.7 182.7 L453.7 183.0 L448.6 183.5 L443.6 184.2 L438.6 185.1 L433.6 186.1 L428.7 187.3 L423.8 188.6 L418.9 190.2 L414.1 191.8 L409.4 193.7 L404.7 195.7 L400.1 197.8 L395.6 200.1 L391.2 202.5 L386.8 205.1 L382.5 207.8 L378.4 210.6 L374.3 213.6 L370.4 216.7 L366.6 219.9 L362.8 223.2 L359.3 226.7 L355.8 230.3 L352.5 233.9 L349.3 237.7 L346.2 241.6 L343.3 245.6 L340.4 249.7 L337.7 253.9 L335.1 258.1 L332.6 262.5 L330.2 266.9 L327.9 271.3 L325.6 275.9 L323.5 280.5 L321.5 285.1 L319.5 289.9 L317.7 294.6 L315.9 299.4 L314.2 304.2 L312.6 309.1 L311.1 314.0 L309.6 318.9 L308.2 323.9 L306.8 328.8 L305.6 333.8 L304.5 338.7 L303.6 343.7 L302.8 348.7 L302.3 353.7 L301.9 358.7 L301.9 363.6 L302.1 368.6 L302.5 373.5 L303.4 378.5 L304.5 383.4 L306.0 388.2 L308.0 392.9 L310.4 397.2 L313.2 401.2 L316.6 404.8 L320.3 407.9 L324.5 410.7 L328.8 413.0 L333.5 415.0 L338.2 416.6 L343.2 417.9 L348.2 419.0 L353.4 419.8 L358.6 420.4 L363.8 420.9 L369.0 421.3 L374.2 421.6 L379.4 421.9 L384.4 422.2 L389.3 422.6 L394.1 423.1 L398.7 423.7 L460.0 430.0Z" fill="#fff"/>
<path d="M473.9 182.8 L468.8 182.6 L463.8 182.5 L458.7 182.7 L453.7 183.0 L448.6 183.5 L443.6 184.2 L438.6 185.1 L433.6 186.1 L428.7 187.3 L423.8 188.6 L418.9 190.2 L414.1 191.8 L409.4 193.7 L404.7 195.7 L400.1 197.8 L395.6 200.1 L391.2 202.5 L386.8 205.1 L382.5 207.8 L378.4 210.6 L374.3 213.6 L370.4 216.7 L366.6 219.9 L362.8 223.2 L359.3 226.7 L355.8 230.3 L352.5 233.9 L349.3 237.7 L346.2 241.6 L343.3 245.6 L340.4 249.7 L337.7 253.9 L335.1 258.1 L332.6 262.5 L330.2 266.9 L327.9 271.3 L325.6 275.9 L323.5 280.5 L321.5 285.1 L319.5 289.9 L317.7 294.6 L315.9 299.4 L314.2 304.2 L312.6 309.1 L311.1 314.0 L309.6 318.9 L308.2 323.9 L306.8 328.8 L305.6 333.8 L304.5 338.7 L303.6 343.7 L302.8 348.7 L302.3 353.7 L301.9 358.7 L301.9 363.6 L302.1 368.6 L302.5 373.5 L303.4 378.5 L304.5 383.4 L306.0 388.2 L308.0 392.9 L310.4 397.2 L313.2 401.2 L316.6 404.8 L320.3 407.9 L324.5 410.7 L328.8 413.0 L333.5 415.0 L338.2 416.6 L343.2 417.9 L348.2 419.0 L353.4 419.8 L358.6 420.4 L363.8 420.9 L369.0 421.3 L374.2 421.6 L379.4 421.9 L384.4 422.2 L389.3 422.6 L394.1 423.1 L398.7 423.7 L376.6 424.0 L376.6 417.0 L355.0 400.0 L350.0 360.0 L370.0 310.0 L385.6 280.0 L398.6 260.0 L410.0 242.0 L432.6 220.0 L456.9 200.0 L465.0 194.0 L472.0 188.0Z" fill="#e3e3e3"/>
<circle cx="371.2" cy="351.2" r="60.2" fill="#fdc67f"/>
<circle cx="556.8" cy="350.2" r="60.2" fill="#fdc67f"/>
<filter id="bl2"><feGaussianBlur stdDeviation="0.6"/></filter><g stroke="#feeada" stroke-width="8" stroke-linecap="round" fill="none" filter="url(#bl2)"><path d="M359.3 331 L353.8 377"/><path d="M386.8 336 L384.5 374.5"/><path d="M542.6 334 L538.5 379"/><path d="M567.3 336.5 L567 378"/></g>
<circle cx="383.8" cy="311.5" r="30" fill="#000"/>
<circle cx="528.9" cy="311" r="30.2" fill="#000"/>
<g stroke="#111" stroke-linecap="round" fill="none"><path d="M368.5 273 Q374 268 380 267" stroke-width="4.6"/><path d="M527.8 267 Q534 269.5 538.5 272" stroke-width="4.6"/></g>
<path d="M437.5 334.5 L444.8 322.5 L452.8 335" stroke="#000" stroke-width="4.5" stroke-linecap="round" stroke-linejoin="round" fill="none"/>
<path d="M524.6 421.8 L528.9 421.9 L533.5 422.0 L538.2 422.1 L543.2 422.1 L548.4 422.0 L553.7 421.8 L559.0 421.5 L564.4 421.1 L569.8 420.5 L575.1 419.7 L580.4 418.8 L585.5 417.6 L590.5 416.1 L595.3 414.4 L599.8 412.5 L604.0 410.1 L607.9 407.5 L611.5 404.5 L614.6 401.2 L617.3 397.4 L619.6 393.3 L621.5 388.9 L623.1 384.3 L624.3 379.4 L625.1 374.4 L625.7 369.2 L626.0 363.9 L626.0 358.6 L625.7 353.2 L625.3 347.9 L624.6 342.6 L623.8 337.5 L622.8 332.4 L621.7 327.5 L620.5 322.7 L619.1 317.9 L617.6 313.3 L615.9 308.6 L614.2 304.0 L612.4 299.4 L610.5 294.8 L608.5 290.2 L606.4 285.6 L604.3 281.0 L602.0 276.5 L599.7 272.0 L597.3 267.5 L594.8 263.1 L592.1 258.7 L589.4 254.4 L586.6 250.1 L583.7 246.0 L580.7 241.9 L577.6 237.9 L574.4 234.0 L571.1 230.1 L567.6 226.4 L564.1 222.9 L560.5 219.4 L556.7 216.1 L552.8 212.9 L548.8 209.8 L544.7 206.9 L540.5 204.2 L536.2 201.6 L531.8 199.2 L527.3 196.9 L522.8 194.8 L518.1 192.8 L513.4 191.0 L508.6 189.4 L503.8 187.9 L498.9 186.6 L493.9 185.5 L489.0 184.6 L484.0 183.8 L479.0 183.2 L473.9 182.8 L468.8 182.6 L463.8 182.5 L458.7 182.7 L453.7 183.0 L448.6 183.5 L443.6 184.2 L438.6 185.1 L433.6 186.1 L428.7 187.3 L423.8 188.6 L418.9 190.2 L414.1 191.8 L409.4 193.7 L404.7 195.7 L400.1 197.8 L395.6 200.1 L391.2 202.5 L386.8 205.1 L382.5 207.8 L378.4 210.6 L374.3 213.6 L370.4 216.7 L366.6 219.9 L362.8 223.2 L359.3 226.7 L355.8 230.3 L352.5 233.9 L349.3 237.7 L346.2 241.6 L343.3 245.6 L340.4 249.7 L337.7 253.9 L335.1 258.1 L332.6 262.5 L330.2 266.9 L327.9 271.3 L325.6 275.9 L323.5 280.5 L321.5 285.1 L319.5 289.9 L317.7 294.6 L315.9 299.4 L314.2 304.2 L312.6 309.1 L311.1 314.0 L309.6 318.9 L308.2 323.9 L306.8 328.8 L305.6 333.8 L304.5 338.7 L303.6 343.7 L302.8 348.7 L302.3 353.7 L301.9 358.7 L301.9 363.6 L302.1 368.6 L302.5 373.5 L303.4 378.5 L304.5 383.4 L306.0 388.2 L308.0 392.9 L310.4 397.2 L313.2 401.2 L316.6 404.8 L320.3 407.9 L324.5 410.7 L328.8 413.0 L333.5 415.0 L338.2 416.6 L343.2 417.9 L348.2 419.0 L353.4 419.8 L358.6 420.4 L363.8 420.9 L369.0 421.3 L374.2 421.6 L379.4 421.9 L384.4 422.2 L389.3 422.6 L394.1 423.1 L398.7 423.7" stroke="#000" stroke-width="10.4" stroke-linecap="round" stroke-linejoin="round" fill="none"/>
<path d="M399 452 L387.5 520 L547.5 520 L534 441 L459.6 452 Z" fill="#6d6d6d" stroke="#000" stroke-width="4.5" stroke-linejoin="round"/>
<path d="M459.6 451 Q462 480 464.8 520" stroke="#000" stroke-width="3.5" fill="none"/>
<path d="M402.5 423 Q418 423.5 432 432 Q448 441 459.6 451.5 Q440 451.5 420 451 Q406 451 398 451 Q391 449 393 445.5 Q396.5 443 396 438 Q394.5 428 402.5 423Z" fill="#f3908f" stroke="#000" stroke-width="4" stroke-linejoin="round"/>
<path d="M459.6 451.5 Q476 440 495 433.5 Q514 426 528.5 423 Q536 427 537.5 433.5 Q537 439.5 534.5 441 Q520 444.5 503 447.5 Q480 452 459.6 452.5Z" fill="#f3908f" stroke="#000" stroke-width="4" stroke-linejoin="round"/>
<path d="M463.7 159.5 Q457 150 447.5 151.5 Q436 154 435.8 167 Q437 177 448 183.5 Q458 188 468.6 186.5 Q482 185 490 176 Q496 168 493 156.5 Q489 146 478.5 146.5 Q468 148 463.7 159.5Z" fill="#8af58a"/>
<path d="M468.5 184 L470.5 196" stroke="#8af58a" stroke-width="10" stroke-linecap="round"/></g>
</svg>
<div class="t" id="cn1" style="left:216.37px;top:106.5px;font-size:13.5px;color:#111;transform:scaleX(1.062);transform-origin:0 0">nguyenhue154</div>
<div class="t" id="cn2" style="left:216.25px;top:121.5px;font-size:13.5px;color:#111;transform:scaleX(1.136);transform-origin:0 0">#hd247</div>
<!--/CANVAS-->
<!-- RIGHT PANEL -->
<div class="hdr" style="left:808px;top:62px;width:216px;height:17px"></div>
<div class="t" id="rh1" style="left:887.23px;top:65.8px;font-size:9.7px;color:#c6c6c6;transform:scaleX(0.914);transform-origin:0 0">Hoa tiêu</div>
<svg class="a" style="left:998px;top:65.2px" width="22" height="11" viewBox="0 0 22 11"><path d="M4.5 3 H1.2 V9.2 H6.8 V6" fill="none" stroke="#c4c4c4" stroke-width="0.9"/><path d="M4 6.5 L7.5 3 M5.5 2.6 H7.9 V5" fill="none" stroke="#c4c4c4" stroke-width="0.9"/><path d="M15 3.2 L19.8 8 M19.8 3.2 L15 8" stroke="#d8dedb" stroke-width="2.2"/></svg>

<div class="a" style="left:808px;top:79px;width:216px;height:22px;background:#232323"></div>
<svg class="a" style="left:808px;top:79px" width="216" height="22" viewBox="808 79 216 22">
<g fill="#404040"><rect x="813" y="81" width="18" height="18" rx="2"/><rect x="840.3" y="81" width="18.2" height="18" rx="2"/><rect x="861.7" y="81" width="17.8" height="18" rx="2"/><rect x="883.3" y="81" width="18.2" height="18" rx="2"/><rect x="910.5" y="81" width="18.2" height="18" rx="2"/><rect x="953.5" y="81" width="18.2" height="18" rx="2"/><rect x="981.8" y="81" width="17.2" height="18" rx="2"/></g>
<rect x="932.5" y="81.5" width="17.5" height="17" rx="2" fill="#1c1c1c" stroke="#3c3c3c"/>
<g fill="#5a5a5a"><rect x="835" y="85" width="1" height="9"/><rect x="906" y="85" width="1" height="9"/><rect x="976" y="85" width="1" height="9"/></g>
<circle cx="820.5" cy="88.5" r="4" fill="none" stroke="#e6e6e6" stroke-width="1.6"/><path d="M823.3 91.3 L826.5 94.5" stroke="#e6e6e6" stroke-width="2.2" stroke-linecap="round"/><text x="820.5" y="91.3" font-size="7" font-weight="bold" text-anchor="middle" fill="#e6e6e6" font-family="Liberation Sans">1</text><circle cx="847.5" cy="88.5" r="4" fill="none" stroke="#e6e6e6" stroke-width="1.6"/><path d="M850.3 91.3 L853.5 94.5" stroke="#e6e6e6" stroke-width="2.2" stroke-linecap="round"/><path d="M845 88.5 H850 M847.5 86 V91" stroke="#e6e6e6" stroke-width="1.3"/>
<path d="M865 84.5 H876 V95.5 H865Z" fill="none" stroke="#e6e6e6" stroke-width="1"/><rect x="868" y="87.5" width="5" height="5" fill="#e6e6e6"/><path d="M866 85.5 L868 87.5 M875 85.5 L873 87.5 M866 94.5 L868 92.5 M875 94.5 L873 92.5" stroke="#e6e6e6" stroke-width="1"/>
<circle cx="890.5" cy="88.5" r="4" fill="none" stroke="#e6e6e6" stroke-width="1.6"/><path d="M893.3 91.3 L896.5 94.5" stroke="#e6e6e6" stroke-width="2.2" stroke-linecap="round"/><path d="M888 88.5 H893" stroke="#e6e6e6" stroke-width="1.3"/>
<path d="M915 86.5 A5.5 5.5 0 1 0 919.5 84.5" fill="none" stroke="#e6e6e6" stroke-width="1.4"/><path d="M913.5 84.5 L916.8 84 L915.8 87.5Z" fill="#e6e6e6"/><rect x="917" y="87.5" width="5" height="5" fill="#e6e6e6" transform="rotate(-20 919.5 90)"/>
<path d="M936.5 85.5 H946 V94.5 H936.5Z" fill="#e6e6e6"/><path d="M935 84 L937.5 86.5 M947.5 84 L945 86.5 M935 96 L937.5 93.5 M947.5 96 L945 93.5" stroke="#e6e6e6" stroke-width="1.2"/>
<path d="M967 86.5 A5.5 5.5 0 1 1 962.5 84.5" fill="none" stroke="#e6e6e6" stroke-width="1.4"/><path d="M968.5 84.5 L965.2 84 L966.2 87.5Z" fill="#e6e6e6"/><rect x="960" y="87.5" width="5" height="5" fill="#e6e6e6" transform="rotate(20 962.5 90)"/>
<rect x="985" y="88" width="4.5" height="8" fill="#e6e6e6"/><rect x="991.5" y="88" width="4.5" height="8" fill="none" stroke="#e6e6e6" stroke-width="1"/><path d="M987 86 Q990.5 82 994 86" fill="none" stroke="#e6e6e6" stroke-width="1"/>
</svg>
<div class="a" style="left:808px;top:101px;width:216px;height:56px;background:#4a4846"></div>
<div class="a" style="left:879.8px;top:101.8px;width:74.2px;height:55px;background:#fff;border:2px solid #e01515;overflow:hidden">
<svg style="position:absolute;left:0;top:0" width="70.2" height="51" viewBox="197 81 581 436" preserveAspectRatio="none"><use href="#char"/><rect x="216" y="108" width="95" height="10" fill="#888" opacity="0.35"/><rect x="216" y="123" width="50" height="10" fill="#888" opacity="0.35"/></svg>
</div>
<div class="bl" style="left:808px;top:161px;width:216px"></div>
<div class="hdr" style="left:808px;top:162px;width:216px;height:15px"></div>
<div class="t" id="rh2" style="left:896.56px;top:165.8px;font-size:9.7px;color:#c6c6c6;transform:scaleX(0.850);transform-origin:0 0">Lớp</div>
<svg class="a" style="left:998px;top:165.2px" width="22" height="11" viewBox="0 0 22 11"><path d="M4.5 3 H1.2 V9.2 H6.8 V6" fill="none" stroke="#c4c4c4" stroke-width="0.9"/><path d="M4 6.5 L7.5 3 M5.5 2.6 H7.9 V5" fill="none" stroke="#c4c4c4" stroke-width="0.9"/><path d="M15 3.2 L19.8 8 M19.8 3.2 L15 8" stroke="#d8dedb" stroke-width="2.2"/></svg>

<div class="t" id="do" style="left:814.45px;top:185px;font-size:9.5px;color:#cfcfcf;transform:scaleX(0.933);transform-origin:0 0">Độ trong</div>
<div class="a" style="left:868.2px;top:182.6px;width:120.5px;height:12.2px;background:linear-gradient(to right,#80c4f6,#4f9ede)"></div>
<div class="t" id="do100" style="left:993.06px;top:185px;font-size:9.5px;color:#d0d0d0;transform:scaleX(0.950);transform-origin:0 0">100 %</div>
<div class="t" id="pha" style="left:813.44px;top:205.5px;font-size:9.5px;color:#cfcfcf;transform:scaleX(0.949);transform-origin:0 0">Pha trộn</div>
<div class="a" style="left:870px;top:200px;width:148.4px;height:17px;background:#474747;border-radius:2px"></div>
<div class="t" id="binh" style="left:871.45px;top:205.5px;font-size:9.5px;color:#d0d0d0;transform:scaleX(0.877);transform-origin:0 0">Bình thường</div>
<svg class="a" style="left:1008px;top:205px" width="8" height="6"><path d="M0.5 1 H7.5 L4 5Z" fill="#aaa"/></svg>
<div class="a" style="left:816.6px;top:225.5px;width:9px;height:9px;border:1px solid #4a4a4a"></div>
<div class="t" id="bao" style="left:828.73px;top:226px;font-size:9.5px;color:#6a6a6a;transform:scaleX(0.904);transform-origin:0 0">Bảo vệ alpha</div>
<div class="a" style="left:889px;top:225.5px;width:10px;height:9.5px;border:1px solid #bdbdbd"></div>
<div class="t" id="xen" style="left:901.58px;top:226px;font-size:9.5px;color:#cfcfcf;transform:scaleX(0.930);transform-origin:0 0">Xén bớt</div>
<div class="a" style="left:958px;top:225.5px;width:9.5px;height:9.5px;border:1px solid #bdbdbd"></div>
<div class="t" id="khoa" style="left:971.20px;top:226px;font-size:9.5px;color:#cfcfcf;transform:scaleX(0.864);transform-origin:0 0">Khóa</div>
<!-- layer list -->
<div class="a" style="left:811.7px;top:241.7px;width:194.8px;height:204px;background:#4a4846"></div>
<div class="a" style="left:827px;top:241.7px;width:179.5px;height:30.8px;background:#4e96d6"></div>
<div class="a" style="left:811.7px;top:272.5px;width:194.8px;height:1.2px;background:#2e2e2e"></div>
<div class="a" style="left:811.7px;top:304.5px;width:194.8px;height:1.2px;background:#2e2e2e"></div>
<div class="a" style="left:811.7px;top:335.5px;width:194.8px;height:1.2px;background:#2e2e2e"></div>
<div class="a" style="left:815px;top:253px;width:8px;height:8px;border-radius:50%;background:radial-gradient(circle at 40% 40%,#f0f0f0,#b8b8b8)"></div>
<div class="a" style="left:815px;top:285px;width:8px;height:8px;border-radius:50%;background:radial-gradient(circle at 40% 40%,#f0f0f0,#b8b8b8)"></div>
<div class="a" style="left:815px;top:316px;width:8px;height:8px;border-radius:50%;background:radial-gradient(circle at 40% 40%,#f0f0f0,#b8b8b8)"></div>
<svg class="a" style="left:838.8px;top:252px" width="28" height="10"><rect x="0" y="2" width="28" height="6" fill="#fff"/><rect x="0.5" y="3" width="17" height="2" fill="#777"/><rect x="0.5" y="5.5" width="12" height="1.5" fill="#999"/></svg>
<div class="a" style="left:838.8px;top:278.4px;width:28px;height:21px;background-color:#fff;background-image:linear-gradient(45deg,#e6e6e6 25%,transparent 25%,transparent 75%,#e6e6e6 75%),linear-gradient(45deg,#e6e6e6 25%,transparent 25%,transparent 75%,#e6e6e6 75%);background-size:5px 5px;background-position:0 0,2.5px 2.5px"></div>
<svg class="a" style="left:838.8px;top:278.4px" width="28" height="21" viewBox="0 0 28 21"><circle cx="10" cy="12" r="3.8" fill="#fdc67f"/><circle cx="18" cy="12" r="3.8" fill="#fdc67f"/><circle cx="10.5" cy="10.5" r="1.9" fill="#000"/><circle cx="17.5" cy="10.5" r="1.9" fill="#000"/></svg>
<div class="a" style="left:838.8px;top:310px;width:28px;height:21px;background-color:#fff;background-image:linear-gradient(45deg,#e6e6e6 25%,transparent 25%,transparent 75%,#e6e6e6 75%),linear-gradient(45deg,#e6e6e6 25%,transparent 25%,transparent 75%,#e6e6e6 75%);background-size:5px 5px;background-position:0 0,2.5px 2.5px"></div>
<svg class="a" style="left:838.8px;top:310px" width="28" height="21" viewBox="0 0 28 21"><path d="M5 17 Q4 6 14 4 Q23 5 22.5 17Z" fill="#fff" stroke="#222" stroke-width="0.9"/><rect x="10.5" y="17" width="7" height="4" fill="#6d6d6d"/></svg>
<div class="t" id="ln1" style="left:878.85px;top:251.5px;font-size:10.5px;color:#fff;font-weight:bold;transform:scaleX(1.056);transform-origin:0 0">nguyenhue154</div>
<div class="t" id="ln2" style="left:879.23px;top:283.5px;font-size:10.5px;color:#e8e8e8;transform:scaleX(0.913);transform-origin:0 0">Lớp2</div>
<div class="t" id="ln3" style="left:879.30px;top:315px;font-size:10.5px;color:#e8e8e8;transform:scaleX(0.891);transform-origin:0 0">Lớp1</div>
<svg class="a" style="left:988.5px;top:250px" width="14" height="14" viewBox="-7 -7 14 14"><g fill="#fff"><circle r="4.2"/><rect x="-1.3" y="-6.6" width="2.6" height="13.2"/><rect x="-1.3" y="-6.6" width="2.6" height="13.2" transform="rotate(45)"/><rect x="-1.3" y="-6.6" width="2.6" height="13.2" transform="rotate(90)"/><rect x="-1.3" y="-6.6" width="2.6" height="13.2" transform="rotate(135)"/></g><circle r="1.4" fill="#4e96d6"/></svg>
<!-- layer scrollbar -->
<svg class="a" style="left:1007px;top:241.7px" width="16" height="204" viewBox="0 0 16 204"><path d="M7.5 1 L11 6 H4Z" fill="#b0b0b0"/><rect x="0.5" y="8.5" width="14.3" height="185" rx="4" fill="#6a6a6a"/><path d="M7.5 203 L11 198 H4Z" fill="#b0b0b0"/></svg>
<!-- layer toolbar -->
<div class="a" style="left:808px;top:446px;width:216px;height:30px;background:#232323"></div>
<svg class="a" style="left:808px;top:446px" width="216" height="30" viewBox="808 446 216 30">
<g fill="#404040"><rect x="814.6" y="449.2" width="18" height="17.6" rx="2"/><rect x="836" y="449.2" width="18" height="17.6" rx="2"/><rect x="857.5" y="449.2" width="18.2" height="17.6" rx="2"/><rect x="879" y="449.2" width="23.4" height="17.6" rx="2"/><rect x="906.2" y="449.2" width="19" height="17.6" rx="2"/><rect x="934" y="449.2" width="17.8" height="17.6" rx="2"/><rect x="982.7" y="449.2" width="18.1" height="17.6" rx="2"/></g>
<rect x="956" y="449.7" width="17" height="16.6" rx="2" fill="#1c1c1c" stroke="#3c3c3c"/>
<g fill="#5a5a5a"><rect x="929" y="453" width="1" height="10"/><rect x="978" y="453" width="1" height="10"/></g>
<g fill="none" stroke="#e2e2e2" stroke-width="1">
<path d="M819 452.5 H825.5 L828.5 455.5 V463.5 H819Z"/>
<path d="M840.5 452.5 H847 L850 455.5 V463.5 H840.5Z"/><rect x="843" y="457" width="4" height="4.5"/>
<path d="M862 452.5 H868.5 L871.5 455.5 V463.5 H862Z"/><path d="M866.5 456 V461.5"/>
<path d="M882.5 452.5 H888.5 L891 455 V460"/><path d="M882.5 452.5 V463.5 H886 M888.5 459.5 V465.5 M885.5 462.5 H891.5" stroke-width="1.3"/>
</g>
<path d="M895 457 H899.5 L897.25 459.5Z" fill="#e2e2e2"/>
<path d="M909.5 454 H914 L915.5 455.5 H921.5 V463 H909.5Z" fill="#e8e8e8"/>
<path d="M938 455 H946 V463 H938Z M940 455 V452.5 H948 V460.5 H946" fill="none" stroke="#e2e2e2" stroke-width="1"/>
<g fill="#e2e2e2"><rect x="959.5" y="452" width="4" height="4"/><rect x="959.5" y="460" width="4" height="4"/><rect x="966" y="455.5" width="4.5" height="4.5"/><path d="M963.5 454 H966 M963.5 462 L966 458" stroke="#e2e2e2" stroke-width="0.8"/></g>
<path d="M986.5 455.5 H997 M988 455.5 V464 H995.5 V455.5 M990.2 457 V462.5 M993.3 457 V462.5 M989.5 455 V453 H994 V455" fill="none" stroke="#e2e2e2" stroke-width="1.1"/>
</svg>
<!-- reference -->
<div class="bl" style="left:808px;top:476px;width:216px"></div>
<div class="hdr" style="left:808px;top:477px;width:216px;height:16.5px"></div>
<div class="t" id="rh3" style="left:883.66px;top:480.8px;font-size:9.7px;color:#c6c6c6;transform:scaleX(0.930);transform-origin:0 0">Reference</div>
<svg class="a" style="left:998px;top:480.2px" width="22" height="11" viewBox="0 0 22 11"><path d="M4.5 3 H1.2 V9.2 H6.8 V6" fill="none" stroke="#c4c4c4" stroke-width="0.9"/><path d="M4 6.5 L7.5 3 M5.5 2.6 H7.9 V5" fill="none" stroke="#c4c4c4" stroke-width="0.9"/><path d="M15 3.2 L19.8 8 M19.8 3.2 L15 8" stroke="#d8dedb" stroke-width="2.2"/></svg>

<div class="a" style="left:808px;top:493.5px;width:216px;height:23.5px;background:#232323"></div>
<svg class="a" style="left:808px;top:493px" width="216" height="24" viewBox="808 493 216 24">
<g fill="#404040"><rect x="813.2" y="496" width="17.5" height="18.2" rx="2"/><rect x="834.5" y="496" width="18" height="18.2" rx="2"/></g>
<g fill="#1c1c1c" stroke="#3c3c3c"><rect x="856.8" y="496.5" width="17" height="17.2" rx="2"/><rect x="883.5" y="496.5" width="17.5" height="17.2" rx="2"/><rect x="905.5" y="496.5" width="17.5" height="17.2" rx="2"/><rect x="927.5" y="496.5" width="16.6" height="17.2" rx="2"/><rect x="954" y="496.5" width="16.7" height="17.2" rx="2"/></g>
<rect x="975" y="496" width="19" height="18.2" rx="2" fill="#4e96d6"/>
<rect x="1015" y="496" width="6.6" height="18.2" rx="2.5" fill="#3a3a3a"/>
<g fill="#5a5a5a"><rect x="878" y="500" width="1" height="10"/><rect x="948.5" y="500" width="1" height="10"/><rect x="997.2" y="500" width="1" height="10"/></g>
<g fill="#eee"><circle cx="818.5" cy="503" r="2.6"/><circle cx="822" cy="500.8" r="3.3"/><circle cx="825" cy="503.2" r="2.4"/><rect x="816" y="502.5" width="11.5" height="3" rx="1.4"/></g><path d="M820.5 503.5 H823.5 V507 H825.5 L822 511 L818.5 507 H820.5Z" fill="#eee" stroke="#404040" stroke-width="0.9"/>
<path d="M837.5 501 H841.5 L843 502.5 H848 V510 H837.5Z" fill="none" stroke="#e2e2e2" stroke-width="1"/><path d="M838 510 L840.5 504.5 H850 L847.5 510Z" fill="#e2e2e2"/>
<path d="M861.5 501.5 L869 509 M869 501.5 L861.5 509" stroke="#e8e8e8" stroke-width="1.5"/>
<circle cx="890.5" cy="503.5" r="4" fill="none" stroke="#e6e6e6" stroke-width="1.6"/><path d="M893.3 506.3 L896.5 509.5" stroke="#e6e6e6" stroke-width="2.2" stroke-linecap="round"/><path d="M888 503.5 H893 M890.5 501 V506" stroke="#e6e6e6" stroke-width="1.3"/>
<path d="M908.5 499.5 H920 V511 H908.5Z" fill="none" stroke="#e6e6e6" stroke-width="1"/><rect x="911.5" y="502.5" width="5.5" height="5" fill="#e6e6e6"/><path d="M909.5 500.5 L911.5 502.5 M919 500.5 L917 502.5 M909.5 510 L911.5 508 M919 510 L917 508" stroke="#e6e6e6" stroke-width="1"/>
<circle cx="934.5" cy="503.5" r="4" fill="none" stroke="#e6e6e6" stroke-width="1.6"/><path d="M937.3 506.3 L940.5 509.5" stroke="#e6e6e6" stroke-width="2.2" stroke-linecap="round"/><path d="M932 503.5 H937" stroke="#e6e6e6" stroke-width="1.3"/>
<path d="M964.5 502 L958 508.5 Q956.5 510.5 957.3 511.3 Q958.2 512 960 510.5 L966.5 504" fill="none" stroke="#e6e6e6" stroke-width="1.2"/><path d="M963.5 501 L967.5 505 M965.5 500 Q967 498.3 968.5 499.8 Q970 501.3 968.3 502.8" fill="none" stroke="#e6e6e6" stroke-width="1.6"/>
<path d="M980.5 511 Q978 507 978.5 504 L980.5 505.5 V500.5 Q981.5 499.5 982.5 500.5 V504 V499 Q983.5 498 984.5 499 V504 V499.5 Q985.5 498.5 986.5 499.5 V504 V501 Q987.5 500 988.5 501 V507 Q988 511 985 511.5Z" fill="#f4f4f4"/>
</svg>
<div class="a" style="left:809.5px;top:517px;width:214.5px;height:19px;background-color:#fff;background-image:linear-gradient(45deg,#ececec 25%,transparent 25%,transparent 75%,#ececec 75%),linear-gradient(45deg,#ececec 25%,transparent 25%,transparent 75%,#ececec 75%);background-size:8px 8px;background-position:0 0,4px 4px"></div>
<!--/RIGHT PANEL-->
<!-- STATUS -->
<div class="t" id="st1" style="left:4.62px;top:539.5px;font-size:9.5px;color:#c8c8c8;transform:scaleX(0.949);transform-origin:0 0">4000 * 3000 pixel</div>
<div class="t" id="st2" style="left:81.10px;top:539.5px;font-size:9.5px;color:#c8c8c8;transform:scaleX(0.959);transform-origin:0 0">(29 * 21.8cm)</div>
<div class="t" id="st3" style="left:143.96px;top:539.5px;font-size:9.5px;color:#c8c8c8;transform:scaleX(0.977);transform-origin:0 0">350 dpi</div>
<div class="t" id="st4" style="left:180.97px;top:539.5px;font-size:9.5px;color:#c8c8c8;transform:scaleX(0.975);transform-origin:0 0">18 %</div>
<div class="t" id="st5" style="left:207.11px;top:539.5px;font-size:9.5px;color:#c8c8c8;transform:scaleX(0.961);transform-origin:0 0">( 4011, 2387 )</div>
<!-- TASKBAR -->
<div class="a" style="left:354px;top:552px;width:29px;height:24px;background:#e8f1f7"></div>
<div class="a" style="left:210px;top:574px;width:22px;height:2px;background:#1f6fc5"></div>
<div class="a" style="left:328.3px;top:574px;width:21.7px;height:2px;background:#1f6fc5"></div>
<div class="a" style="left:354px;top:574px;width:29px;height:2px;background:#1f6fc5"></div>
<svg class="a" style="left:0;top:551px" width="1024" height="25" viewBox="0 551 1024 25">
<g fill="#111"><rect x="8.1" y="558.5" width="5.8" height="5.3"/><rect x="14.7" y="558" width="5.9" height="5.8"/><rect x="8.1" y="564.6" width="5.8" height="5.3"/><rect x="14.7" y="564.6" width="5.9" height="5.8"/></g>
<circle cx="45" cy="561.7" r="4.6" fill="none" stroke="#111" stroke-width="1.3"/><path d="M41.7 565 L37.5 569.5" stroke="#111" stroke-width="1.4"/>
<circle cx="72.2" cy="563.5" r="5" fill="none" stroke="#1a1f24" stroke-width="2"/>
<path d="M94.5 558.5 H103 M94.5 569.5 H103 M95.5 561 V567 H102 V561Z" fill="none" stroke="#222" stroke-width="1.2"/><rect x="105.5" y="560" width="1.6" height="1.6" fill="#222"/><rect x="105.5" y="563" width="1.6" height="6" fill="#222"/>
<path d="M125.5 559 H130 L131.5 560.5 H138.5 V570 H125.5Z" fill="#f5c84a"/><path d="M125.5 562 H138.5 V570 H125.5Z" fill="#f9d66a"/><rect x="128" y="564.5" width="7.5" height="5.5" fill="#2f7fd0"/><rect x="130.5" y="566.5" width="2.5" height="3.5" fill="#f9d66a"/>
<circle cx="162" cy="563.6" r="5.8" fill="#e03a3a"/><circle cx="162" cy="563.6" r="3.8" fill="#f4f4f4"/><text x="162" y="566" font-size="6" text-anchor="middle" fill="#c03030" font-family="Liberation Sans" font-weight="bold">e</text>
<rect x="185" y="558" width="13" height="8.8" fill="#5ab0ea"/><rect x="185" y="558" width="13" height="8.8" fill="none" stroke="#3a8fd0" stroke-width="0.6"/><rect x="188" y="568.5" width="7.5" height="1.2" fill="#9aa8b8"/>
<circle cx="220.6" cy="563.6" r="6.2" fill="#1a73c8"/><path d="M214.8 562 Q216 557.5 221 557.5 Q226.5 557.5 226.8 563 Q226 566 222.5 566 Q219 566 218.5 563.5 Q217.5 565.5 220 568" fill="#3ccf7a"/><circle cx="221.5" cy="564.5" r="2.3" fill="#fff"/>
<rect x="243.9" y="557.4" width="13.1" height="13.3" rx="1" fill="#e2f1dc" stroke="#6fa06a" stroke-width="0.8"/><text x="250.5" y="568.5" font-size="10" font-weight="bold" text-anchor="middle" fill="#1e7a3a" font-family="Liberation Sans">X</text>
<rect x="273.6" y="557.4" width="13.3" height="13.3" rx="1" fill="#dce8fa" stroke="#7fa0d0" stroke-width="0.8"/><text x="280.2" y="568.5" font-size="9.5" font-weight="bold" text-anchor="middle" fill="#2156b8" font-family="Liberation Sans">W</text>
<rect x="303.3" y="557.4" width="13.3" height="13.3" rx="1" fill="#fbe0d6" stroke="#d88a70" stroke-width="0.8"/><text x="310" y="568.5" font-size="10" font-weight="bold" text-anchor="middle" fill="#d04a1e" font-family="Liberation Sans">P</text>
<circle cx="339.2" cy="563.6" r="5.8" fill="none" stroke="#e04a3a" stroke-width="3"/><path d="M339.2 557.8 A5.8 5.8 0 0 0 334 566.5" fill="none" stroke="#2aa04a" stroke-width="3"/><path d="M344.5 562 A5.8 5.8 0 0 1 340 569.4" fill="none" stroke="#f4c030" stroke-width="3"/><circle cx="339.2" cy="563.6" r="2.3" fill="#3a7ae0"/>
<circle cx="368.9" cy="563.6" r="5.2" fill="#18a880"/><path d="M368.9 563.6 L364.2 561.5 A5.2 5.2 0 0 1 371 558.8Z" fill="#e8402a"/><path d="M368.9 563.6 L371 558.8 A5.2 5.2 0 0 1 374 562.5Z" fill="#f0a030"/><circle cx="370" cy="565" r="2.3" fill="#1a90b0" opacity="0.6"/>
<circle cx="692" cy="563" r="3.5" fill="#b8d4ec"/><circle cx="696" cy="561.5" r="4.5" fill="#c4dcf0"/><path d="M689 566.5 H701" stroke="#a8c8e4" stroke-width="2.5"/><path d="M692 568.5 L691 571 M695 568.5 L694 571" stroke="#5aa0d8" stroke-width="1"/>
<path d="M795 567 L798.5 563 L802 567" fill="none" stroke="#222" stroke-width="1.2"/>
<path d="M813 561 H823 V567.5 H813Z M811.5 563 V565.5" fill="none" stroke="#222" stroke-width="1"/><path d="M814 559 L816 562" stroke="#222" stroke-width="1"/>
<rect x="829.8" y="558.5" width="11.5" height="9.5" fill="none" stroke="#222" stroke-width="1.1"/><path d="M832 561.5 H836 M832 564 H834.5" stroke="#222" stroke-width="1"/><rect x="837.5" y="565.5" width="5" height="5" fill="#f08a10"/>
<path d="M850 561.5 H852.5 L855.5 558.5 V568.5 L852.5 565.5 H850Z" fill="none" stroke="#222" stroke-width="1"/><path d="M857.5 561 Q859 563.5 857.5 566 M860 559 Q862.5 563.5 860 568" fill="none" stroke="#222" stroke-width="1"/>
<path d="M870.5 568.5 Q872 563 878 561.5 M873.5 569 Q874.5 566 878 565 M876.5 569.5 L877.5 568.5" fill="none" stroke="#222" stroke-width="1.1"/><path d="M872 566 Q874 561 880.5 559" fill="none" stroke="#999" stroke-width="1"/>
<rect x="890.5" y="560" width="6.5" height="7.5" rx="1" fill="none" stroke="#222" stroke-width="1"/><path d="M892 558 H895.5 M892 569.5 H895.5 M897 562 L899 561 V566.5 L897 565.5" fill="none" stroke="#222" stroke-width="1"/>
<path d="M990.5 558 H1003.8 V566.5 H999 L997 569.5 L995 566.5 H990.5Z" fill="#111"/><path d="M993 561 H1001 M993 563.5 H999" stroke="#d8e6f2" stroke-width="0.9"/>
<rect x="1020.5" y="552" width="0.8" height="24" fill="#9aaabb"/>
</svg>
<div class="t" id="tk1" style="left:709.05px;top:558.6px;font-size:11px;color:#111;transform:scaleX(0.935);transform-origin:0 0">77°F</div>
<div class="t" id="tk2" style="left:737.66px;top:558.6px;font-size:11px;color:#111;transform:scaleX(1.030);transform-origin:0 0">Light rain</div>
<div class="t" id="tk3" style="left:907.30px;top:559.5px;font-size:10.5px;color:#111;transform:scaleX(0.886);transform-origin:0 0">ENG</div>
<div class="t" id="tk4" style="left:940.00px;top:559.5px;font-size:10.5px;color:#111;transform:scaleX(0.884);transform-origin:0 0">8:03 AM</div>
</body></html>
